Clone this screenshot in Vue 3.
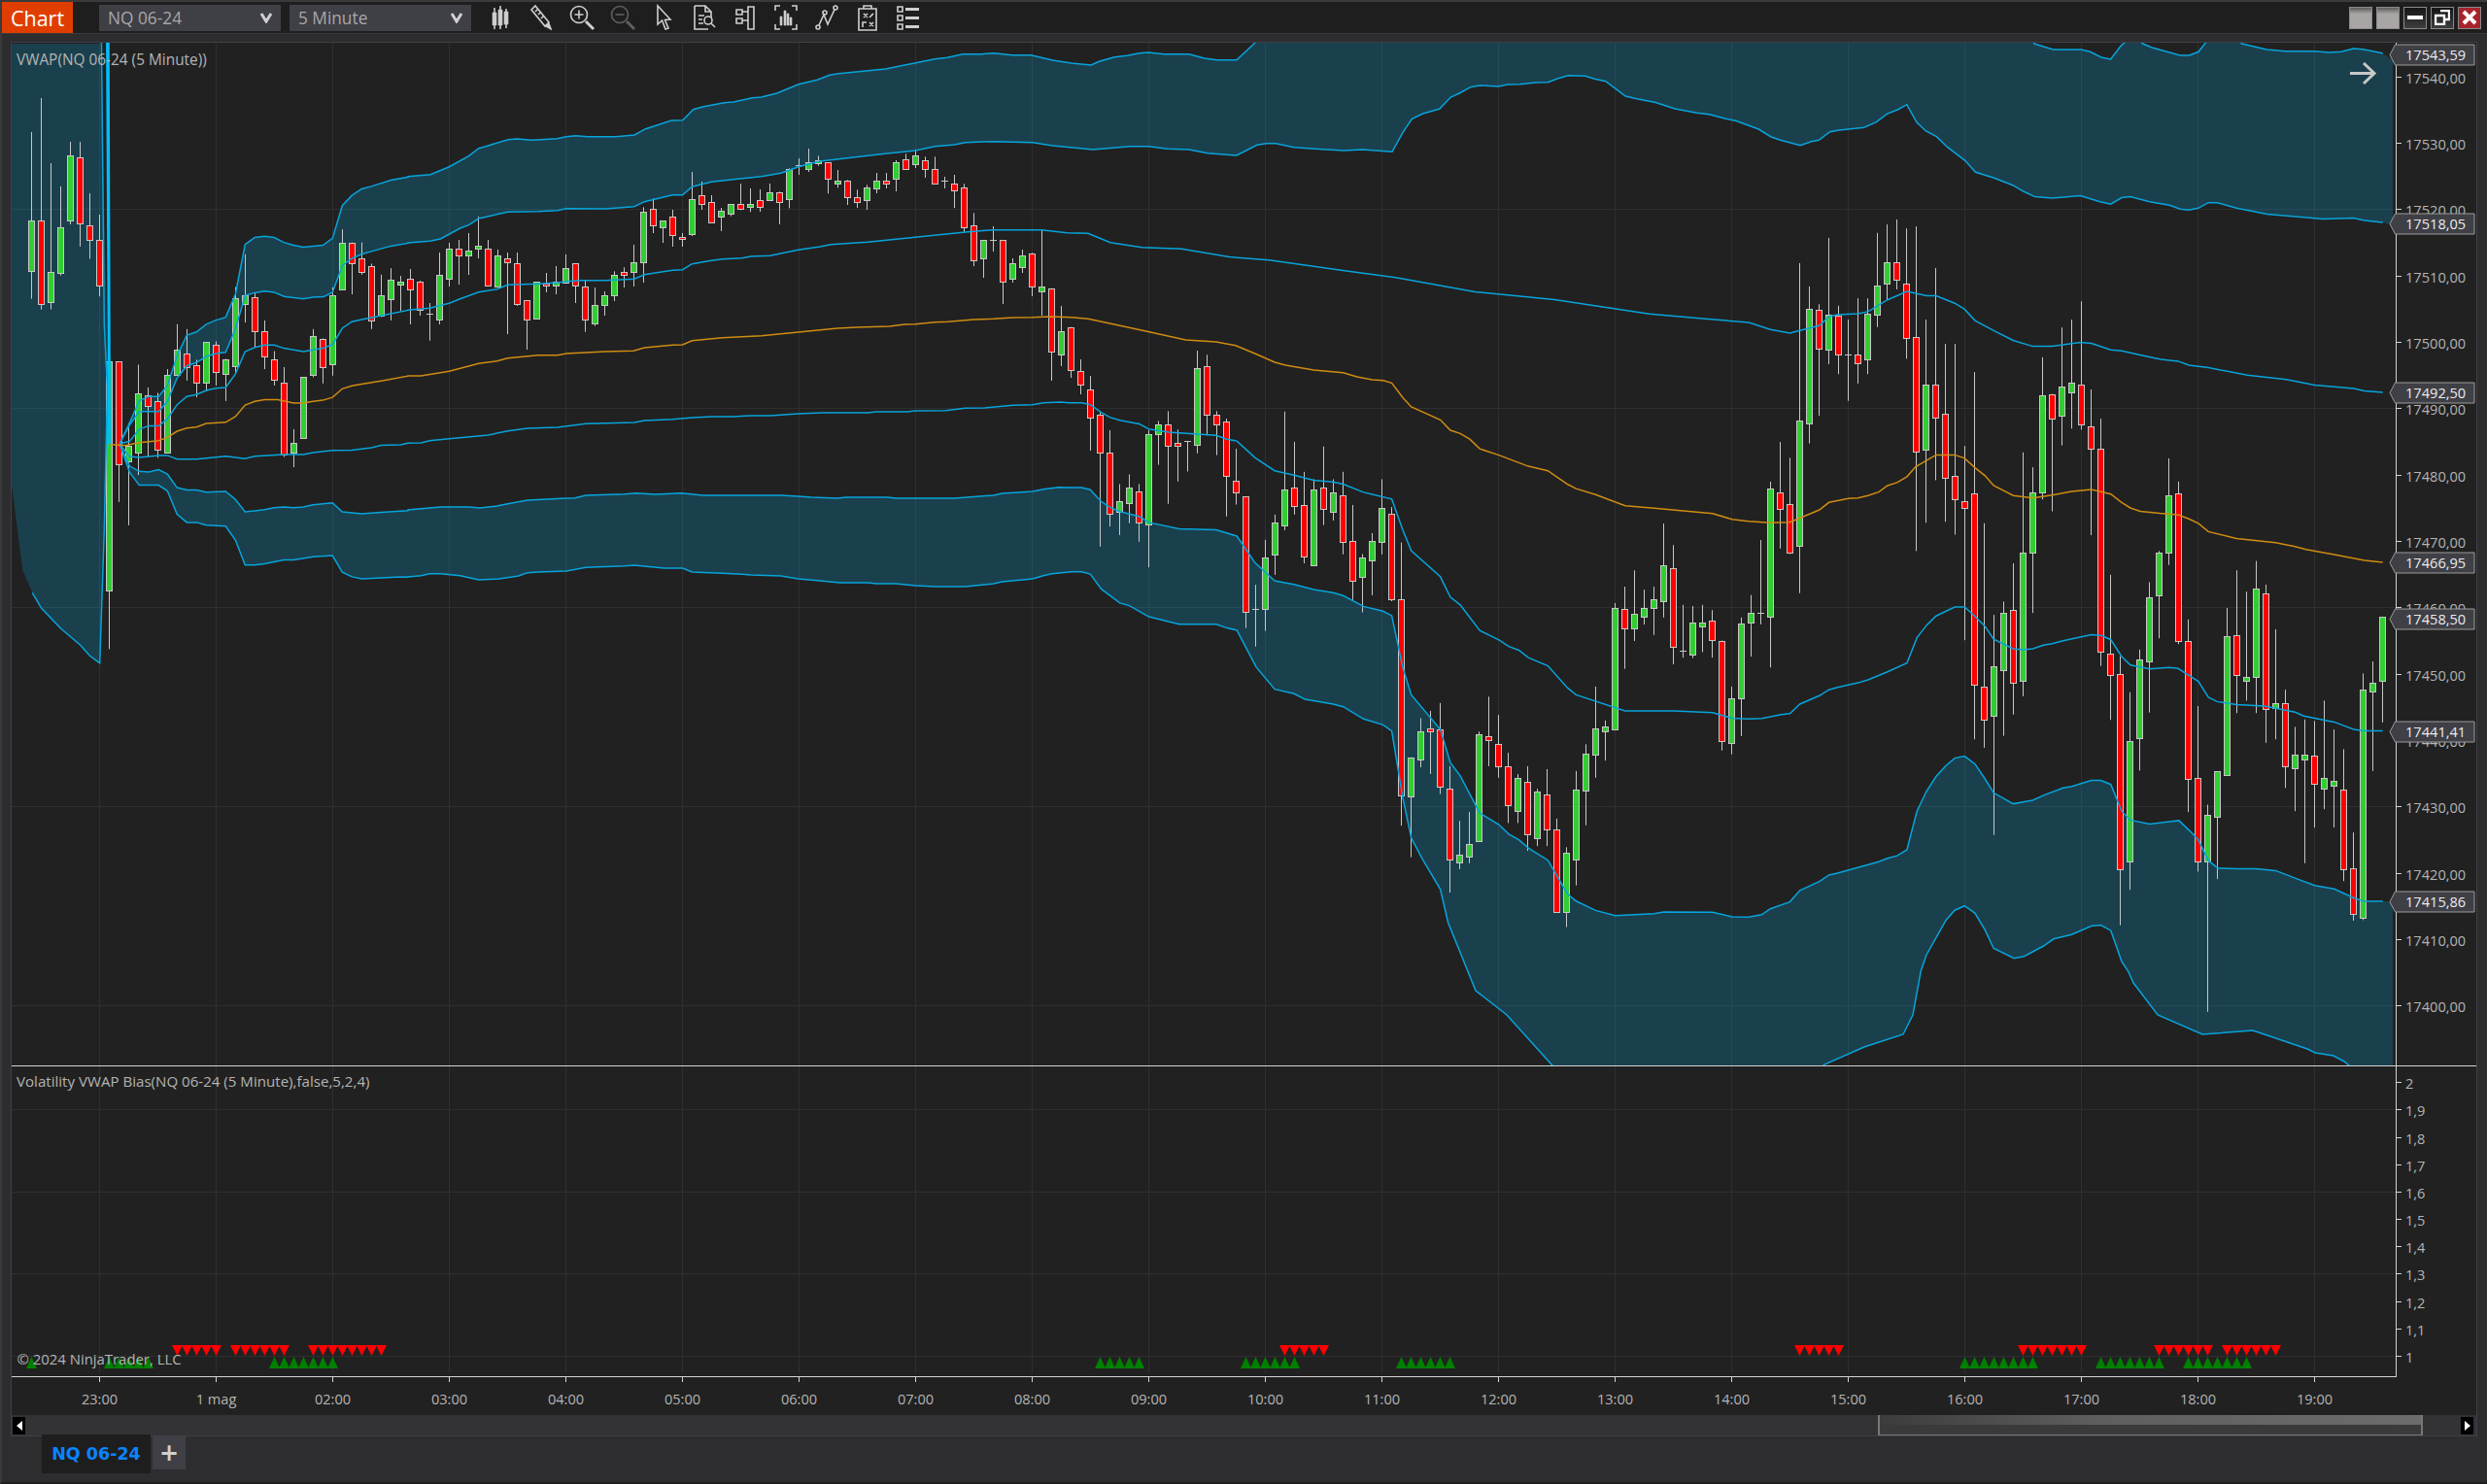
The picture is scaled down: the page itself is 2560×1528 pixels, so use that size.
<script setup>
// points were read off the chart in zoomed crops, so each block carries its own scale
const pts = (fx, fy, x0, y0, raw) => raw.map(([x, y]) => [x0 + x / fx, y0 + y / fy])
const z5 = (raw) => pts(3, 2.376, 0, 40, raw)
const z6 = (raw) => pts(2.24, 3, 420, 130, raw)
const z7 = (raw) => pts(2.24, 2.6133, 1100, 350, raw)
const z8 = (raw) => pts(2.24, 1.96, 1800, 200, raw)
const z10 = (raw) => pts(1.568, 3, 500, 40, raw)
const z11 = (raw) => pts(1.568, 3, 1450, 40, raw)
const ds = (raw) => pts(0.6125, 0.6125, 0, 0, raw)
const toPath = (list) => list.map(([x, y]) => `${x.toFixed(1)},${y.toFixed(1)}`).join(' ')

const upper3 = [
  ...z5([[370,990],[400,940],[430,885],[460,875],[490,875],[517,848],[547,775],[577,725],[607,717],[637,698],[667,688],[697,681],[727,625],[757,503],[787,486],[817,483],[847,486],[877,498],[907,505],[937,510],[967,507],[997,505],[1027,488],[1057,408],[1087,383],[1117,367],[1147,361],[1207,346],[1260,338]]),
  ...z6([[0,155],[52,149],[95,125],[140,92],[163,68]]),
  ...z10([[0,332],[36,311],[50,309],[75,313],[115,308],[130,302],[145,299],[165,302],[210,302],[240,297],[258,278],[300,252],[318,251],[335,218],[350,210],[385,197],[400,195],[430,182],[445,180],[470,168],[505,140],[535,127],[555,112],[570,107],[645,93],[725,62],[745,58],[770,47],[800,47],[820,44],[850,50],[880,50],[915,66],[945,75],[977,81],[990,70],[1015,56],[1035,52],[1055,44],[1070,42],[1095,47],[1135,47],[1160,60],[1180,65],[1212,65],[1240,15],[1260,-20]]),
  [2070, 30],
  ...z11([[1000,-10],[1010,15],[1040,33],[1085,33],[1100,40],[1118,57],[1133,63],[1150,20],[1170,-10],[1185,15],[1200,27],[1245,51],[1260,51],[1275,40],[1285,15],[1300,-10],[1330,-10],[1345,15],[1385,33],[1415,38],[1462,38],[1485,42],[1505,40],[1525,30],[1540,32],[1568,43]]),
  [2452.7, 55],
]

const upper2 = [
  ...z5([[370,990],[400,945],[430,912],[490,912],[517,887],[547,830],[577,800],[607,792],[637,777],[667,770],[697,767],[727,710],[757,628],[787,621],[817,617],[847,620],[877,630],[937,636],[967,632],[1000,631],[1027,620],[1057,555],[1087,537],[1117,527],[1147,520],[1207,507],[1260,500]]),
  ...z6([[0,360],[50,355],[75,348],[120,315],[140,305],[163,285],[230,265],[300,263],[345,260],[365,254],[455,255],[522,248],[545,233],[610,212],[633,212],[655,187],[700,172],[765,162],[815,155],[860,145],[900,125],[950,108],[1100,85],[1170,75],[1215,62],[1260,57],[1285,50],[1350,47],[1440,50]]),
  ...z10([[915,330],[980,342],[1040,332],[1070,332],[1100,340],[1135,342],[1165,353],[1212,360],[1245,328],[1260,323],[1275,323],[1305,335],[1350,341],[1385,345],[1415,342],[1463,349],[1480,290]]),
  ...z11([[0,262],[5,248],[22,232],[50,216],[68,180],[82,168],[100,149],[115,144],[145,147],[160,141],[180,140],[205,135],[225,134],[240,123],[258,113],[285,115],[300,124],[318,131],[350,177],[370,186],[397,196],[430,216],[465,229],[485,233],[510,246],[530,254],[565,279],[585,303],[600,313],[632,329],[650,317],[662,313],[680,287],[695,282],[735,274],[755,257],[772,232],[790,218],[804,203],[820,258],[835,285],[852,302],[870,335],[898,376],[915,412],[945,430],[975,452],[993,472]]),
  ...z8([[660,5],[700,8],[765,3],[810,15],[835,20],[860,7],[880,5],[925,15],[970,22],[995,30],[1015,32],[1037,28],[1060,17],[1080,17],[1125,28],[1195,40],[1325,50],[1395,48],[1420,53],[1462,57]]),
]

const upper1 = [
  ...z5([[370,990],[400,985],[430,955],[460,947],[490,947],[517,930],[547,895],[577,875],[607,870],[637,860],[667,855],[697,853],[727,820],[757,765],[787,755],[817,749],[847,749],[877,757],[937,765],[997,757],[1027,748],[1057,708],[1087,692],[1117,687],[1177,677],[1260,664]]),
  ...z6([[0,568],[50,562],[95,547],[120,533],[163,512],[205,503],[230,490],[300,487],[345,483],[390,476],[455,476],[522,472],[545,458],[610,445],[633,443],[655,425],[700,415],[725,410],[770,407],[790,402],[835,400],[900,382],[950,372],[975,365],[1060,358],[1170,343],[1285,327],[1350,320],[1460,320],[1520,329],[1568,331]]),
  ...ds([[700,153],[720,156],[745,157],[775,162],[800,164],[850,171],[880,175],[930,184],[980,189],[1040,198],[1075,201]]),
  ...z8([[0,259],[50,273],[95,280],[118,275],[163,265],[185,247],[205,243],[252,241],[275,237],[320,213],[365,196],[385,200],[410,205],[432,205],[475,220],[498,232],[522,255],[565,275],[610,295],[655,307],[700,307],[765,299],[790,301],[835,314],[860,316],[900,324],[950,333],[990,337],[1015,345],[1060,350],[1150,365],[1240,374],[1305,385],[1395,392],[1420,397],[1462,400]]),
]

const vwap = [
  ...z5([[340,992],[385,995],[430,988],[490,983],[517,975],[547,960],[577,952],[607,950],[637,941],[697,938],[727,924],[757,896],[787,887],[817,883],[857,883],[907,891],[937,891],[967,887],[997,884],[1027,877],[1057,856],[1087,849],[1117,845],[1177,837],[1260,825]]),
  ...z6([[0,771],[30,771],[95,757],[163,733],[205,725],[230,716],[300,707],[345,707],[365,702],[410,699],[455,696],[520,694],[545,684],[610,676],[633,675],[655,662],[725,653],[770,650],[815,647],[900,636],[990,624],[1035,621],[1110,618],[1145,612],[1170,611],[1215,605],[1245,604],[1305,597],[1350,595],[1395,591],[1440,590],[1480,588],[1530,590],[1568,595]]),
  [1175, 340],
  ...z7([[270,0],[340,5],[385,15],[432,38],[475,60],[500,68],[565,81],[633,88],[665,99],[700,107],[725,109],[745,116],[770,155],[790,180],[857,215],[880,243],[903,252],[925,267],[948,293],[992,310],[1060,340],[1105,352],[1150,388],[1170,400],[1215,416],[1283,446],[1350,453],[1485,467],[1530,483],[1568,488]]),
  ...z8([[50,663],[95,662],[163,637],[185,622],[230,614],[252,613],[275,608],[300,601],[320,588],[342,582],[365,570],[385,550],[432,526],[475,526],[498,533],[522,552],[545,568],[565,588],[610,608],[655,613],[700,607],[745,600],[790,596],[835,605],[860,622],[880,633],[903,640],[948,644],[990,647],[1015,655],[1037,664],[1060,681],[1125,695],[1215,703],[1260,711],[1285,717],[1350,727],[1420,739],[1462,743]]),
]

const lower1 = [
  ...z5([[370,992],[400,1022],[430,1024],[490,1019],[517,1019],[547,1028],[607,1028],[697,1021],[757,1027],[787,1021],[877,1017],[937,1017],[967,1012],[1027,1007],[1087,1006],[1147,1000],[1177,994],[1237,993],[1260,989]]),
  ...z6([[0,979],[30,978],[50,971],[95,965],[185,954],[230,941],[275,933],[345,930],[410,919],[522,915],[545,909],[610,905],[655,900],[700,897],[750,897],[790,894],[835,894],[900,888],[955,885],[1060,885],[1080,882],[1150,882],[1170,879],[1240,878],[1285,871],[1330,870],[1395,862],[1440,860],[1465,854],[1505,852]]),
  ...z7([[0,169],[30,169],[50,174],[75,195],[95,208],[118,216],[163,226],[185,240],[230,248],[340,257],[365,267],[388,272],[430,317],[475,352],[520,364],[565,378],[610,382],[633,388],[680,410],[745,428],[770,510],[790,567],[857,637],[880,692],[903,713],[948,782],[992,807],[1015,825],[1038,835],[1060,855],[1105,877],[1150,936],[1170,955],[1283,998],[1395,998],[1485,1003],[1530,1018],[1568,1020]]),
  ...z8([[30,1058],[75,1050],[95,1048],[118,1029],[163,1012],[185,1000],[205,995],[252,986],[275,980],[320,964],[365,946],[388,895],[410,870],[432,851],[475,833],[498,833],[520,850],[545,872],[565,898],[610,917],[633,919],[655,917],[680,910],[700,907],[725,901],[790,889],[815,891],[835,899],[860,933],[880,950],[925,958],[970,955],[990,957],[1037,983],[1060,1015],[1080,1024],[1125,1030],[1190,1033],[1260,1045],[1280,1053],[1350,1065],[1395,1080],[1420,1083],[1462,1083]]),
]

const lower2 = [
  ...z5([[370,992],[400,1045],[430,1058],[460,1060],[490,1054],[517,1065],[547,1098],[577,1104],[607,1104],[637,1109],[697,1107],[727,1127],[757,1157],[787,1155],[817,1152],[847,1147],[877,1145],[907,1147],[937,1145],[967,1140],[1027,1135],[1057,1157],[1117,1162],[1177,1158],[1260,1154]]),
  ...z6([[0,1185],[75,1176],[140,1176],[165,1179],[205,1173],[230,1166],[275,1155],[365,1149],[385,1148],[410,1140],[500,1136],[525,1133],[570,1137],[630,1133],[680,1140],[860,1140],[900,1143],[930,1146],[990,1149],[1010,1146],[1105,1146],[1125,1149],[1260,1149],[1350,1140],[1370,1134],[1440,1128],[1465,1121],[1500,1115]]),
  ...z7([[0,397],[30,397],[50,403],[75,435],[95,450],[118,462],[163,475],[185,491],[255,508],[340,511],[388,528],[430,600],[475,648],[520,658],[565,672],[610,680],[633,688],[680,717],[725,730],[745,742],[770,880],[790,955],[857,1048],[880,1137],[903,1173],[948,1273],[992,1304],[1015,1330],[1038,1345],[1060,1367],[1105,1400],[1150,1490],[1170,1510],[1215,1535],[1260,1549],[1350,1544],[1372,1539],[1485,1540],[1530,1552],[1568,1553]]),
  ...z8([[30,1454],[50,1442],[95,1428],[118,1405],[163,1387],[185,1374],[205,1370],[300,1347],[320,1340],[342,1335],[365,1323],[388,1245],[410,1205],[432,1175],[455,1153],[475,1138],[498,1134],[522,1150],[545,1180],[565,1208],[610,1230],[655,1223],[680,1213],[725,1198],[745,1195],[790,1183],[812,1183],[835,1191],[860,1245],[880,1263],[925,1271],[970,1266],[992,1264],[1015,1283],[1037,1303],[1060,1345],[1082,1360],[1125,1361],[1170,1361],[1215,1365],[1260,1380],[1305,1395],[1350,1402],[1395,1420],[1420,1427],[1462,1427]]),
]

const lower3 = [
  ...z5([[370,992],[400,1060],[430,1092],[490,1092],[517,1106],[547,1163],[577,1183],[607,1183],[637,1190],[697,1192],[727,1226],[757,1287],[787,1287],[817,1284],[877,1275],[907,1275],[967,1267],[1027,1264],[1057,1305],[1087,1316],[1117,1321],[1177,1319],[1237,1316],[1260,1317]]),
  ...z6([[0,1392],[30,1388],[50,1382],[75,1382],[120,1388],[163,1401],[210,1398],[255,1389],[275,1379],[300,1377],[365,1374],[410,1363],[500,1358],[522,1356],[590,1365],[633,1365],[655,1377],[725,1381],[770,1384],[790,1386],[860,1389],[900,1398],[950,1404],[995,1410],[1060,1410],[1080,1413],[1125,1413],[1170,1419],[1215,1422],[1285,1422],[1350,1413],[1370,1407],[1440,1398],[1465,1388],[1485,1382],[1530,1376]]),
  ...z7([[30,624],[50,630],[75,670],[118,708],[140,715],[185,745],[255,765],[340,765],[365,775],[388,781],[432,880],[475,940],[520,952],[545,967],[610,980],[633,987],[680,1020],[725,1036],[745,1052],[770,1230],[790,1340],[815,1395],[857,1478],[875,1568]]),
  [1519, 1020], [1551, 1045], [1597, 1096], [1610, 1112], [1865, 1112], [1878, 1096], [1919, 1078], [1959, 1065], [1969, 1045],
  ...z8([[397,1568],[410,1535],[455,1465],[475,1445],[498,1436],[522,1451],[545,1485],[565,1522],[612,1542],[635,1538],[680,1517],[703,1503],[745,1494],[790,1477],[812,1475],[835,1486],[860,1548],[875,1568]]),
  [2196, 1012], [2221, 1045], [2267, 1065], [2319, 1061], [2375, 1080], [2383, 1084], [2402, 1087], [2413, 1093], [2418, 1097], [2430, 1112],
]

// band left of the session open, it runs off the top of the panel
const openBand = z5([[36,12],[36,1090],[70,1300],[100,1355],[128,1393],[188,1443],[248,1483],[278,1510],[308,1527],[322,1200],[333,800],[310,12]])

const bands = [
  toPath([...upper3, [2463, 62], [2463, 232], ...[...upper2].reverse()]),
  toPath([...lower2, [2463, 928], [2463, 1112], ...[...lower3].reverse()]),
  toPath(openBand),
]

const blueLines = [
  upper3, upper2, upper1, lower1, lower2, lower3,
  z5([[100,1355],[128,1393],[188,1443],[248,1483],[278,1510],[308,1527],[322,1200],[333,800],[340,992]]),
  z5([[313,-30],[322,700],[340,992]]),
].map(toPath)

const openLines = [
  z5([[330,-30],[337,992]]),
  z5([[335,-30],[339,992]]),
].map(toPath)

const bars = (fy, y0, rows) => rows.map((r) => ({
  hi: y0 + r[0] / fy,
  top: y0 + r[1] / fy,
  bottom: y0 + r[2] / fy,
  lo: y0 + r[3] / fy,
  up: r[4] === 1,
}))

const candles = [
  ...bars(2.376, 40, [
    [228,445,567,636,1],[145,445,648,662,0],[304,571,645,662,1],[361,462,572,579,1],[252,284,445,454,1],[252,291,452,508,0],[378,457,493,538,0],[430,492,604,630,0],
    [790,790,1350,1493,1],[790,790,1041,1133,0],[940,996,1034,1190,1],[797,868,1013,1067,1],[853,871,899,1023,0],[866,887,1006,1025,0],[808,823,1013,1013,1],[698,761,823,823,1],
    [710,771,802,836,0],[785,799,842,877,0],[742,742,840,862,1],[740,749,814,848,0],[783,783,819,886,1],[607,635,800,815,1],[527,628,648,694,1],[620,633,714,755,0],
    [689,716,778,808,0],[764,785,835,848,0],[803,840,1017,1023,0],[955,989,1013,1048,1],[828,828,977,977,1],[710,726,823,828,1],[733,733,802,843,0],[608,628,795,824,1],
    [466,498,612,612,1],[498,498,548,625,0],[498,536,571,577,0],[550,555,688,710,0],[577,628,676,681,1],[561,590,636,689,1],[580,595,600,666,1],
  ]),
  ...bars(3, 130, [
    [441,472,503,612,0],[477,481,568,585,0],[546,580,580,662,2],[390,460,598,612,1],[360,379,472,495,1],[351,379,400,489,0],[330,385,400,459,1],[279,370,379,408,1],
    [351,379,493,495,0],[381,400,496,498,1],[390,409,421,642,0],[390,424,548,555,0],[538,538,598,690,0],[481,481,595,596,1],[453,487,493,513,0],[432,481,493,519,1],
    [396,439,482,482,1],[424,424,493,546,0],[477,496,598,635,0],[498,553,610,617,1],[510,523,553,585,1],[448,460,523,540,1],[436,451,460,498,0],[366,421,451,495,1],
    [250,265,421,483,1],[223,256,307,330,0],[292,292,313,360,1],[258,280,337,372,0],[330,343,349,372,0],[141,226,334,339,1],[171,214,241,258,0],[213,235,298,299,0],
    [252,262,280,324,1],[241,241,271,278,1],[177,241,256,259,0],[192,241,250,265,1],[195,229,250,264,0],[177,205,229,230,1],[202,205,235,303,0],[130,133,226,253,1],
    [99,120,120,150,2],[69,112,133,141,1],[91,106,114,122,1],[112,112,163,208,0],[135,169,178,190,1],[166,169,220,243,0],[196,220,235,252,0],[181,190,227,258,1],
    [144,169,193,207,1],[144,169,178,192,0],[105,112,163,201,1],[85,103,133,133,0],[73,91,118,129,1],[94,106,133,159,0],[94,133,176,180,0],[156,169,169,192,2],
    [150,176,199,252,0],[178,190,313,330,0],[268,307,415,432,0],[352,352,409,468,1],[309,352,352,387,2],[352,352,481,549,0],[408,424,472,483,1],[381,400,436,453,1],
    [391,394,496,525,0],[319,496,511,585,1],[500,502,697,786,0],[555,634,706,741,1],[620,620,754,777,0],[720,757,799,828,0],
  ]),
  ...bars(2.6133, 350, [
    [97,132,210,298,0],[195,202,304,556,0],[243,304,468,502,0],[388,435,463,525,1],[362,398,440,493,1],[388,408,492,543,0],[243,254,497,612,1],[218,228,254,336,1],
    [192,228,285,441,0],[241,278,286,381,0],[272,272,272,354,2],[29,77,283,305,1],[40,70,202,257,0],[192,202,228,310,0],[212,220,367,475,0],[293,380,411,443,0],
    [422,422,733,775,0],[659,725,725,825,2],[538,586,725,783,1],[470,492,577,632,1],[193,403,498,512,1],[274,398,448,470,0],[355,443,582,601,0],[375,403,605,608,1],
    [287,398,456,498,0],[375,411,462,486,1],[355,417,543,577,0],[444,542,649,700,0],[576,586,638,733,1],[520,542,594,687,1],[375,453,543,577,1],[450,467,698,703,0],
    [545,699,1225,1307,0],[1123,1123,1228,1392,1],[1018,1054,1130,1150,1],[998,1046,1052,1168,0],[977,1047,1203,1222,0],[1147,1208,1399,1487,0],[1294,1386,1407,1424,1],[1270,1355,1391,1408,1],
    [1054,1060,1349,1350,1],[960,1065,1077,1147,0],[1009,1086,1148,1178,0],[1111,1147,1252,1300,0],[1168,1178,1268,1300,1],[1147,1190,1331,1375,0],[1208,1216,1341,1362,1],[1155,1224,1316,1362,0],
    [1288,1316,1538,1538,0],[1365,1381,1538,1580,1],[1160,1211,1399,1468,1],[1088,1114,1212,1306,1],[933,1046,1117,1178,1],[1024,1041,1052,1132,1],[708,720,1047,1047,1],[664,725,777,885,0],
    [620,738,777,810,1],[672,720,746,766,1],[664,699,720,794,1],[494,605,702,747,1],[552,613,825,873,0],[713,837,837,855,2],[716,761,846,856,1],[713,761,770,840,1],
    [727,756,807,855,0],[809,809,1078,1105,0],[933,965,1084,1115,1],[747,764,965,1066,1],
  ]),
  ...bars(1.96, 200, [
    [809,845,865,933,1],[698,845,845,868,2],[580,593,852,955,1],[500,601,636,715,0],[532,626,724,726,0],[139,456,710,805,1],[186,232,462,503,1],[222,234,312,447,0],
    [88,244,313,343,1],[225,245,323,363,0],[253,323,323,417,2],[210,324,342,382,0],[210,241,334,363,1],[78,185,244,268,1],[61,138,181,213,1],[51,138,173,192,0],
    [69,181,291,332,0],[65,289,520,720,0],[253,385,516,663,1],[149,385,450,577,0],[302,442,573,661,0],[302,569,616,687,0],[508,620,634,900,0],[359,603,989,1100,0],
    [664,993,1061,1117,0],[849,952,1052,1293,1],[822,844,961,1093,1],[745,838,985,1050,0],[521,724,981,1013,1],[551,601,724,845,1],[329,405,601,616,1],[403,403,452,640,0],
    [269,389,446,507,1],[253,381,399,473,1],[216,385,465,475,0],[394,469,513,688,0],[453,513,924,952,0],[768,928,971,1061,0],[933,969,1363,1475,0],[1005,1103,1347,1404,1],
    [919,938,1097,1163,1],[783,814,942,1046,1],[720,724,810,896,1],[533,607,724,748,1],[580,603,901,908,0],[858,901,1179,1247,0],[1033,1177,1347,1367,0],[1232,1253,1347,1650,1],
    [1165,1165,1257,1382,1],[835,891,1172,1173,1],[759,889,971,1047,0],[802,975,981,1022,1],[740,795,975,1047,1],[788,805,1038,1107,0],[878,1028,1036,1100,1],[1000,1028,1155,1198,0],
    [1075,1130,1159,1245,1],[1060,1130,1140,1350,1],[1063,1132,1189,1278,0],[1022,1178,1200,1241,1],[1080,1183,1193,1278,1],[1120,1202,1363,1386,0],[1288,1361,1452,1466,0],[967,999,1461,1465,1],
    [943,985,1003,1164,1],[853,853,981,1066,1],
  ]),
].map((c, i) => {
  const top = Math.round(c.top) + 0.5
  const bottom = Math.round(c.bottom) + 0.5
  return { ...c, x: 32.5 + i * 10, top, height: bottom - top, fill: c.up ? '#32cd32' : '#ff0000' }
})

const barX = (i) => 32.5 + i * 10
const expand = (groups) => groups.flatMap(([a, b]) => Array.from({ length: b - a + 1 }, (_, k) => barX(a + k)))
const sellMarks = expand([[15,19],[21,26],[29,36],[129,133],[182,186],[205,211],[219,224],[226,231]])
const buyMarks = expand([[0,0],[8,12],[25,31],[110,114],[125,130],[141,146],[199,206],[213,219],[222,228]])

const timeLabels = ['23:00', '1 mag']
for (let h = 2; h <= 19; h++) timeLabels.push(String(h).padStart(2, '0') + ':00')
const times = timeLabels.map((label, i) => ({ label, x: 102.5 + i * 120 }))

const priceGrid = [215.5, 420.5, 625.5, 830.5, 1035.5]
const biasGrid = [1142.5, 1227.5, 1311.5, 1396.5]

const priceY = (p) => 215.3 + (17520 - p) * 6.833
const prices = []
for (let p = 17540; p >= 17400; p -= 10) prices.push({ label: p + ',00', y: Math.round(priceY(p)) + 0.5 })

const biasTicks = ['2', '1,9', '1,8', '1,7', '1,6', '1,5', '1,4', '1,3', '1,2', '1,1', '1'].map((label, i) => ({
  label,
  y: Math.round(1114.2 + i * 28.18) + 0.5,
}))

const flags = [
  { label: '17543,59', y: 56.5 },
  { label: '17518,05', y: 230.5 },
  { label: '17492,50', y: 404.5 },
  { label: '17466,95', y: 579.5 },
  { label: '17458,50', y: 637.5 },
  { label: '17441,41', y: 753.5 },
  { label: '17415,86', y: 928.5 },
]
const flagPath = (y) => `M2460 ${y} L2465.5 ${y - 10.5} H2547 V${y + 10.5} H2465.5 Z`
</script>

<template>
  <div class="terminal">
    <header class="toolbar">
      <div class="chip">Chart</div>
      <div class="combo first">
        <span>NQ 06-24</span>
        <svg width="14" height="12" viewBox="0 0 14 12"><path d="M2 2 L7 10 L12 2" /></svg>
      </div>
      <div class="combo">
        <span>5 Minute</span>
        <svg width="14" height="12" viewBox="0 0 14 12"><path d="M2 2 L7 10 L12 2" /></svg>
      </div>

      <div class="tools">
        <svg class="tool" viewBox="0 0 28 28">
          <path d="M8 4v22M14 2v24M20 5v20" />
          <path class="solid" d="M6 9h4v13H6zM12 6h4v16h-4zM18 8h4v13h-4z" />
        </svg>
        <svg class="tool" viewBox="0 0 28 28">
          <path d="M4 6 L8 2 L22 19 L18 23 Z M8 8 L11 5 M11 11 L14 8 M14 15 L17 12" />
          <path class="solid" d="M18 23 L22 19 L25 27 Z" />
        </svg>
        <svg class="tool" viewBox="0 0 28 28">
          <circle cx="11" cy="11" r="8.5" />
          <path d="M6.5 11h9M11 6.5v9" />
          <path class="thick" d="M18 18 L26 26" />
        </svg>
        <svg class="tool dim" viewBox="0 0 28 28">
          <circle cx="11" cy="11" r="8.5" />
          <path d="M6.5 11h9" />
          <path class="thick" d="M18 18 L26 26" />
        </svg>
        <svg class="tool" viewBox="0 0 28 28">
          <path d="M8 2 L8 21 L12.5 17 L16 26 L19 25 L15.5 16.5 L21 16 Z" />
        </svg>
        <svg class="tool" viewBox="0 0 28 28">
          <path d="M4 2h11l6 6v6M15 2v6h6M4 2v24h14M8 12h6M8 16h4M8 20h5" />
          <circle cx="18" cy="17" r="4" />
          <path d="M21 20 L25 24" />
        </svg>
        <svg class="tool" viewBox="0 0 28 28">
          <path d="M17 3h6v23h-6zM5 6h6v5H5zM5 15h6v5H5zM11 8h6M11 17h6" />
        </svg>
        <svg class="tool" viewBox="0 0 28 28">
          <path d="M8 2H3v5M20 2h5v5M8 26H3v-5M20 26h5v-5" />
          <path class="solid" d="M8 13h2v9H8zM12 7h2v15h-2zM15 10h2v12h-2zM18 14h2v8h-2z" />
        </svg>
        <svg class="tool" viewBox="0 0 28 28">
          <circle cx="5" cy="24" r="2" />
          <circle cx="12" cy="9" r="2" />
          <circle cx="23" cy="4" r="2" />
          <path d="M6 22 L11 11 L15 21 L22 6" />
        </svg>
        <svg class="tool" viewBox="0 0 28 28">
          <path d="M5 5h18v22H5zM10 5V2h8v3" />
          <path d="M10 10l4 4M14 10l-4 4M16 14l4 -4M19 10v2M9 24v-5h4M16 19l4 4M20 19l-4 4" />
        </svg>
        <svg class="tool" viewBox="0 0 28 28">
          <path d="M3 3h5v5H3zM3 12h5v5H3zM3 21h5v5H3z" />
          <path class="thick" d="M11 5.5h14M11 14.5h14M11 23.5h14" />
        </svg>
      </div>

      <div class="window-buttons">
        <div class="win blank"></div>
        <div class="win blank"></div>
        <div class="win dark">
          <svg width="16" height="6" viewBox="0 0 16 6"><rect width="16" height="4" y="1" fill="#fff" /></svg>
        </div>
        <div class="win dark">
          <svg width="16" height="16" viewBox="0 0 16 16">
            <path d="M6 1h9v9h-4M1 6h9v9H1z" fill="none" stroke="#fff" stroke-width="2.4" />
          </svg>
        </div>
        <div class="win close">
          <svg width="16" height="16" viewBox="0 0 16 16">
            <path d="M2 2 L14 14 M14 2 L2 14" stroke="#fff" stroke-width="4" />
          </svg>
        </div>
      </div>
    </header>

    <main class="chart-frame">
      <svg class="chart" width="2537" height="1413" viewBox="12 44 2537 1413">
        <defs>
          <clipPath id="plot"><rect x="12" y="44" width="2454" height="1053" /></clipPath>
        </defs>

        <g class="grid">
          <line v-for="y in priceGrid" :key="y" x1="12" x2="2466" :y1="y" :y2="y" />
          <line v-for="y in biasGrid" :key="y" x1="12" x2="2466" :y1="y" :y2="y" />
          <line v-for="t in times" :key="t.label" :x1="t.x" :x2="t.x" y1="44" y2="1414" />
        </g>

        <g clip-path="url(#plot)">
          <polygon v-for="(b, i) in bands" :key="i" class="band" :points="b" />
          <g v-for="c in candles" :key="c.x">
            <line class="wick" :x1="c.x" :x2="c.x" :y1="c.hi" :y2="c.lo" />
            <line v-if="c.height < 2" class="wick" :x1="c.x - 3.5" :x2="c.x + 3.5" :y1="c.top" :y2="c.top" />
            <rect v-else class="body" :x="c.x - 3" :y="c.top" width="6" :height="c.height" :fill="c.fill" />
          </g>
          <polyline v-for="(l, i) in blueLines" :key="i" class="blue" :points="l" />
          <polyline v-for="(l, i) in openLines" :key="i" class="bright" :points="l" />
          <polyline class="orange" :points="toPath(vwap)" />
        </g>

        <polygon
          v-for="x in sellMarks"
          :key="'s' + x"
          class="sell"
          :points="`${x - 5.5},1385 ${x + 5.5},1385 ${x},1396`"
        />
        <polygon
          v-for="x in buyMarks"
          :key="'b' + x"
          class="buy"
          :points="`${x - 5.5},1409 ${x + 5.5},1409 ${x},1397`"
        />

        <g class="axis">
          <line x1="12" x2="2549" y1="1097.5" y2="1097.5" />
          <line x1="12" x2="2467" y1="1417.5" y2="1417.5" />
          <line x1="2466.5" x2="2466.5" y1="44" y2="1418" />
          <line v-for="p in prices" :key="p.label" x1="2466" x2="2472" :y1="p.y" :y2="p.y" />
          <line v-for="b in biasTicks" :key="b.label + b.y" x1="2466" x2="2472" :y1="b.y" :y2="b.y" />
          <line v-for="t in times" :key="t.label" :x1="t.x" :x2="t.x" y1="1417" y2="1423" />
        </g>

        <g class="labels">
          <text v-for="p in prices" :key="p.label" x="2476" :y="p.y + 6.5">{{ p.label }}</text>
          <text v-for="b in biasTicks" :key="b.label + b.y" x="2476" :y="b.y + 6.5">{{ b.label }}</text>
          <text v-for="t in times" :key="t.label" :x="t.x" y="1446" text-anchor="middle">{{ t.label }}</text>
          <text class="name-vwap" x="17" y="67">VWAP(NQ 06-24 (5 Minute))</text>
          <text class="name-bias" x="17" y="1119">Volatility VWAP Bias(NQ 06-24 (5 Minute),false,5,2,4)</text>
          <text class="name-copy" x="17.5" y="1405">© 2024 NinjaTrader, LLC</text>
        </g>

        <g v-for="f in flags" :key="f.label">
          <path class="flag" :d="flagPath(f.y)" />
          <text class="flag-text" x="2476" :y="f.y + 5">{{ f.label }}</text>
        </g>

        <path class="arrow" d="M2419 75.5 H2444 M2433 65 L2444 75.5 L2433 86" />
      </svg>

      <div class="scrollbar">
        <div class="scroll-btn">
          <svg width="6" height="10" viewBox="0 0 6 10"><path d="M6 0 V10 L0 5 Z" fill="#fff" /></svg>
        </div>
        <div class="scroll-lead"></div>
        <div class="scroll-thumb"></div>
        <div class="scroll-tail"></div>
        <div class="scroll-btn">
          <svg width="6" height="10" viewBox="0 0 6 10"><path d="M0 0 V10 L6 5 Z" fill="#fff" /></svg>
        </div>
      </div>
    </main>

    <footer class="tabs">
      <div class="tab">NQ 06-24</div>
      <div class="tab-add">+</div>
    </footer>
  </div>
</template>

<style>
html,
body {
  margin: 0;
  background: #2d2d30;
}
</style>

<style scoped>
.terminal {
  width: 2560px;
  height: 1528px;
  box-sizing: border-box;
  display: flex;
  flex-direction: column;
  background: #2d2d30;
  border-top: 2px solid #3a3a3d;
  border-left: 2px solid #3a3a3d;
  border-bottom: 2px solid #1e1e1e;
  font-family: "Open Sans", "Noto Sans", sans-serif;
  overflow: hidden;
}

.toolbar {
  flex: none;
  height: 32px;
  display: flex;
  align-items: center;
  background: #1e1e1e;
  border-bottom: 1px solid #3a3a3d;
}

.chip {
  width: 73px;
  height: 100%;
  flex: none;
  display: flex;
  align-items: center;
  justify-content: center;
  background: #e03e00;
  color: #fff;
  font-size: 21.5px;
}

.combo {
  width: 187px;
  height: 27px;
  flex: none;
  box-sizing: border-box;
  padding: 0 8px 0 9px;
  margin-left: 9px;
  display: flex;
  align-items: center;
  justify-content: space-between;
  background: #3f3f46;
  color: #a8a8a8;
  font-size: 17.3px;
}

.combo.first {
  margin-left: 27px;
}

.combo path {
  fill: none;
  stroke: #d0d0d0;
  stroke-width: 3;
}

.tools {
  display: flex;
  gap: 14px;
  margin-left: 16px;
}

.tool {
  width: 28px;
  height: 28px;
  fill: none;
  stroke: #cfcfcf;
  stroke-width: 1.6;
}

.tool .solid {
  fill: #cfcfcf;
  stroke-width: 0.6;
}

.tool .thick {
  stroke-width: 3;
}

.tool.dim {
  stroke: #5f5f5f;
}

.window-buttons {
  display: flex;
  gap: 4px;
  margin-left: auto;
  margin-right: 6px;
}

.win {
  width: 24px;
  height: 23px;
  box-sizing: border-box;
  display: flex;
  align-items: center;
  justify-content: center;
  border: 1px solid #8a8a8a;
}

.win.blank {
  background: linear-gradient(#5e5c5c, #a9a5a5 30%, #a9a5a5);
}

.win.dark {
  background: linear-gradient(#151515, #3e3e3e);
}

.win.close {
  background: #a8242c;
}

.chart-frame {
  flex: none;
  width: 2539px;
  box-sizing: border-box;
  margin: 8px 0 0 9px;
  border: 1px solid #3f3f46;
  background: #212121;
}

.chart {
  display: block;
  font-size: 14.6px;
}

.grid line {
  stroke: #2f2f2f;
  stroke-width: 1;
}

.band {
  fill: rgba(0, 191, 255, 0.2);
}

.wick {
  stroke: #c8c8c8;
  stroke-width: 1;
}

.body {
  stroke: #c8c8c8;
  stroke-width: 1;
}

.blue {
  fill: none;
  stroke: #07a4dc;
  stroke-width: 1.5;
}

.bright {
  fill: none;
  stroke: #00bfff;
  stroke-width: 2;
}

.orange {
  fill: none;
  stroke: #cf8c12;
  stroke-width: 1.5;
}

.sell {
  fill: #ff0000;
}

.buy {
  fill: #008000;
}

.axis line {
  stroke: #d4d4d4;
  stroke-width: 1;
}

.labels text {
  fill: #b4b4b4;
}

.labels .name-vwap {
  font-size: 15.4px;
}

.labels .name-bias {
  font-size: 15.1px;
}

.labels .name-copy {
  font-size: 14.9px;
}

.flag {
  fill: #3f3f46;
  stroke: #9c9c9c;
  stroke-width: 1;
}

.flag-text {
  fill: #ececec;
}

.arrow {
  fill: none;
  stroke: #c8c8c8;
  stroke-width: 3;
}

.scrollbar {
  height: 21px;
  display: flex;
  align-items: center;
  background: #333336;
}

.scroll-btn {
  width: 13px;
  height: 18px;
  flex: none;
  margin: 0 3px 0 1px;
  display: flex;
  align-items: center;
  justify-content: center;
  background: #000;
}

.scroll-lead {
  width: 1904px;
  flex: none;
}

.scroll-thumb {
  width: 561px;
  height: 21px;
  flex: none;
  box-sizing: border-box;
  background:
    linear-gradient(to bottom, transparent 50%, #3a3a3a 50%),
    linear-gradient(to right, #3c3c3c, #5e5e5e 40%, #6c6c6c);
  border-right: 2px solid #777;
  border-left: 2px solid #777;
  border-bottom: 1px solid #777;
}

.scroll-tail {
  flex: 1;
}

.tabs {
  flex: none;
  margin-top: -2px;
  display: flex;
  align-items: flex-start;
  gap: 2px;
  padding-left: 41px;
}

.tab {
  width: 112px;
  height: 40px;
  display: flex;
  align-items: center;
  justify-content: center;
  background: #1e1e1e;
  color: #0a84ff;
  font-family: "DejaVu Sans", sans-serif;
  font-weight: 700;
  font-size: 17.5px;
}

.tab-add {
  width: 34px;
  height: 34px;
  margin-top: 2px;
  display: flex;
  align-items: center;
  justify-content: center;
  background: #3f3f46;
  color: #cfcfcf;
  font-family: "DejaVu Sans", sans-serif;
  font-weight: 700;
  font-size: 24px;
}
</style>
